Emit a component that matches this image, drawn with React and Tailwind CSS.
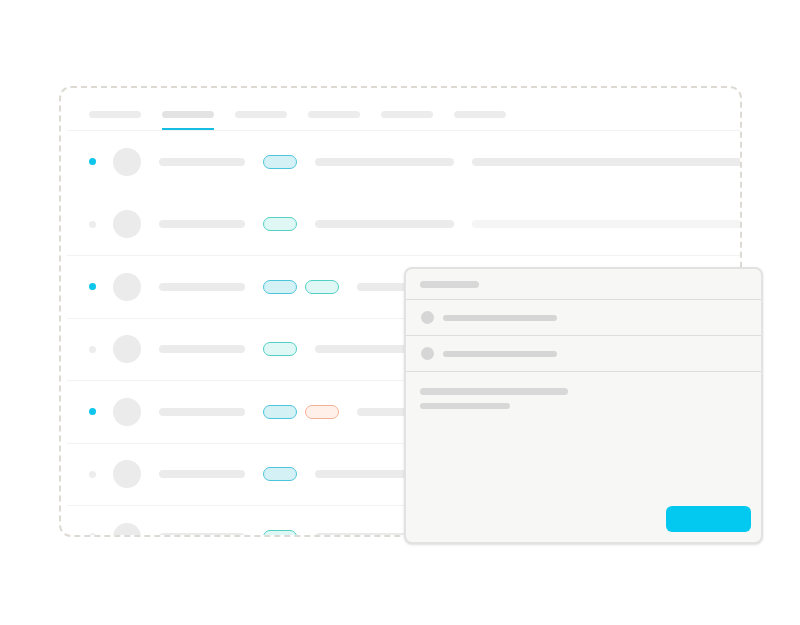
const rows = [
  { active: true, pills: ['a'], fade: false },
  { active: false, pills: ['b'], fade: true },
  { active: true, pills: ['a', 'b'], fade: false },
  { active: false, pills: ['b'], fade: false },
  { active: true, pills: ['a', 'o'], fade: false },
  { active: false, pills: ['a'], fade: false },
  { active: false, pills: ['b'], fade: false },
];

const pillStyles = {
  a: 'bg-[#d4f1f6] border-[#4cc4dc]',
  b: 'bg-[#dff8f5] border-[#52d0c4]',
  o: 'bg-[#fff1ea] border-[#f3b095]',
};

const tabs = [false, true, false, false, false, false];

const Row = ({ row, index }) => (
  <div
    className={`ml-[6px] h-[62.5px] shrink-0 flex items-center pl-[22px] ${
      index === 0 || index >= 2 ? 'border-t border-[#f2f2f2]' : 'border-t border-transparent'
    }`}
  >
    <div className={`w-[7px] h-[7px] rounded-full shrink-0 ${row.active ? 'bg-[#0ec5ec]' : 'bg-[#ededed]'}`} />
    <div className="ml-[17px] w-7 h-7 rounded-full bg-[#ebebeb] shrink-0" />
    <div className="ml-[18px] w-[86px] h-2 rounded-full bg-[#ebebeb] shrink-0" />
    <div className="ml-[18px] flex gap-2 shrink-0">
      {row.pills.map((p, i) => (
        <div key={i} className={`w-[34px] h-[14px] rounded-full border ${pillStyles[p]}`} />
      ))}
    </div>
    <div className="ml-[18px] w-[139px] h-2 rounded-full bg-[#ebebeb] shrink-0" />
    <div className={`ml-[18px] w-[300px] h-2 rounded-l-full shrink-0 ${row.fade ? 'bg-[#f5f5f5]' : 'bg-[#ebebeb]'}`} />
  </div>
);

export default function App() {
  return (
    <div className="relative w-[800px] h-[625px] bg-white pt-[86px] pl-[59px]">
      {/* dashed list card */}
      <div className="w-[683px] h-[451px] border-[2.5px] border-dashed border-[#dddad3] rounded-xl overflow-hidden flex flex-col">
        <div className="h-[42px] shrink-0 flex gap-[21px] pl-[28px] pt-[23px]">
          {tabs.map((on, i) => (
            <div key={i} className="flex flex-col">
              <div className={`w-[52px] h-2 rounded-sm ${on ? 'bg-[#e3e3e3]' : 'bg-[#ececec]'}`} />
              <div className={`mt-[10px] h-[2px] relative z-10 ${on ? 'bg-[#16bde3]' : 'bg-transparent'}`} />
            </div>
          ))}
        </div>
        {rows.map((row, i) => (
          <Row key={i} row={row} index={i} />
        ))}
      </div>

      {/* detail panel */}
      <div className="absolute left-[404px] top-[267px] w-[359px] h-[277px] border-2 border-[#e2e2e2] rounded-lg bg-[#f7f7f5] shadow-sm flex flex-col">
        <div className="h-[31px] shrink-0 flex items-center pl-[14px] border-b border-[#dedede]">
          <div className="w-[59px] h-[7px] rounded-full bg-[#d8d8d8]" />
        </div>
        {[0, 1].map((i) => (
          <div key={i} className="h-[36px] shrink-0 flex items-center pl-[15px] border-b border-[#dedede]">
            <div className="w-[13px] h-[13px] rounded-full bg-[#d6d6d6]" />
            <div className="ml-[9px] w-[114px] h-[6px] rounded-full bg-[#d6d6d6]" />
          </div>
        ))}
        <div className="flex-1 flex flex-col pl-[14px] pt-[16px] pr-[10px] pb-[10px]">
          <div className="w-[148px] h-[7px] rounded-full bg-[#d8d8d8]" />
          <div className="mt-[8px] w-[90px] h-[6px] rounded-full bg-[#d8d8d8]" />
          <div className="mt-auto self-end w-[85px] h-[26px] rounded-md bg-[#03c8ef]" />
        </div>
      </div>
    </div>
  );
}
